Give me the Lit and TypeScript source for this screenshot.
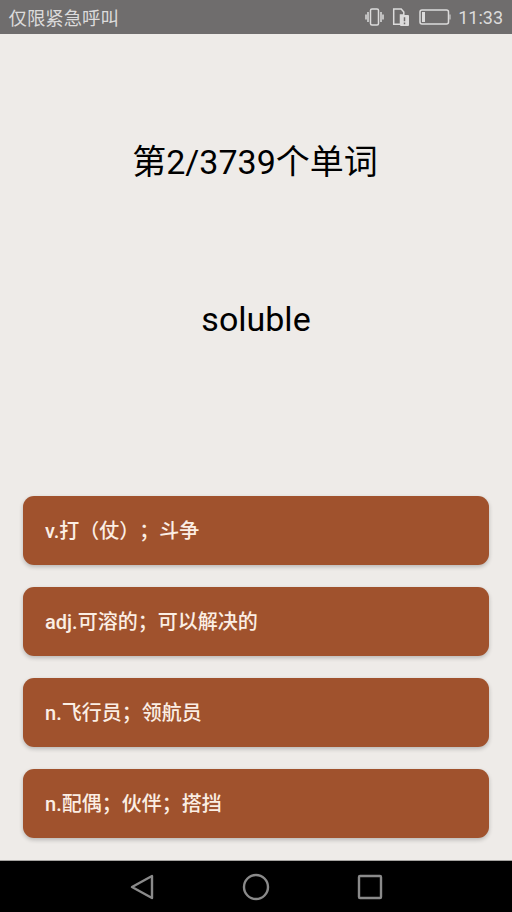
import { LitElement, html, css } from "lit";
import { customElement } from "lit/decorators.js";

const OPTIONS = ["v.打（仗）；斗争", "adj.可溶的；可以解决的", "n.飞行员；领航员", "n.配偶；伙伴；搭挡"];

@customElement("app-root")
export class AppRoot extends LitElement {
  static styles = css`
    :host {
      display: flex;
      flex-direction: column;
      width: 512px;
      height: 912px;
      background: #eeebe8;
      font-family: Roboto, "Noto Sans CJK SC", sans-serif;
      overflow: hidden;
      text-spacing-trim: space-all;
    }
    .status {
      height: 34px;
      flex: none;
      background: #6f6d6d;
      color: #dcdbdb;
      display: flex;
      align-items: center;
      padding: 0 9px 0 9px;
    }
    .carrier { flex: 1; font-size: 18.4px; margin-left: -0.5px; }
    .icons { display: flex; align-items: center; }
    .vib { margin-right: 8px; }
    .sim { margin-right: 10px; }
    .batt { margin-right: 7px; }
    .time { font-size: 18px; }
    .main {
      flex: 1;
      display: flex;
      flex-direction: column;
      align-items: center;
    }
    .title {
      margin-top: 106px;
      margin-right: 2px;
      font-size: 34px;
      line-height: 44px;
      color: #000;
    }
    .word {
      margin-top: 113px;
      font-size: 34px;
      line-height: 44px;
      color: #000;
    }
    .options {
      margin-top: 155px;
      width: 466px;
      display: flex;
      flex-direction: column;
      gap: 22px;
    }
    .opt {
      height: 69px;
      box-sizing: border-box;
      background: #a0522d;
      border-radius: 11px;
      color: #fbeee4;
      display: flex;
      align-items: center;
      padding: 0 0 2px 22px;
      font-size: 20px;
      font-weight: 500;
      box-shadow: 0 2px 4px rgba(0, 0, 0, 0.22);
    }
    .nav {
      height: 52px;
      flex: none;
      background: #000;
      border-top: 1px solid #a5a3a0;
      box-sizing: border-box;
      display: flex;
      align-items: center;
      justify-content: center;
      gap: 87px;
    }
    .nav svg { display: block; }
  `;

  render() {
    return html`
      <div class="status">
        <span class="carrier">仅限紧急呼叫</span>
        <div class="icons">
          <svg class="vib" width="19" height="18" viewBox="0 0 19 18" fill="none" stroke="#dcdbdb" stroke-width="1.5">
            <rect x="5.5" y="1" width="8" height="16" rx="1.5"/>
            <path d="M3 4v10M1 6.5v5M16 4v10M18 6.5v5"/>
          </svg>
          <svg class="sim" width="17" height="18" viewBox="0 0 17 18" fill="none">
            <path d="M1.7 1h7.5l2.6 3v3H8.5v9.3H1.7z" stroke="#dcdbdb" stroke-width="1.5"/>
            <rect x="8" y="7" width="9" height="11" rx="1" fill="#dcdbdb"/>
            <path d="M12.5 9.3v4M12.5 14.6v1.6" stroke="#6f6d6d" stroke-width="1.5"/>
          </svg>
          <svg class="batt" width="32" height="16" viewBox="0 0 32 16" fill="none">
            <rect x="1" y="1" width="28.5" height="14" rx="2" stroke="#dcdbdb" stroke-width="1.5"/>
            <rect x="3" y="3" width="3" height="10" fill="#dcdbdb"/>
            <path d="M30.5 5.5h1v5h-1z" fill="#dcdbdb"/>
          </svg>
          <span class="time">11:33</span>
        </div>
      </div>
      <div class="main">
        <div class="title">第2/3739个单词</div>
        <div class="word">soluble</div>
        <div class="options">
          ${OPTIONS.map((o) => html`<div class="opt">${o}</div>`)}
        </div>
      </div>
      <div class="nav">
        <svg width="26" height="28" viewBox="0 0 26 28" fill="none" stroke="#8a8a8a" stroke-width="2.4" stroke-linejoin="round">
          <path d="M23 3v22L3 14z"/>
        </svg>
        <svg width="28" height="28" viewBox="0 0 28 28" fill="none" stroke="#8a8a8a" stroke-width="2.4">
          <circle cx="14" cy="14" r="12"/>
        </svg>
        <svg width="26" height="26" viewBox="0 0 26 26" fill="none" stroke="#8a8a8a" stroke-width="2.4" stroke-linejoin="round">
          <rect x="2" y="2" width="22" height="22" rx="1"/>
        </svg>
      </div>
    `;
  }
}
